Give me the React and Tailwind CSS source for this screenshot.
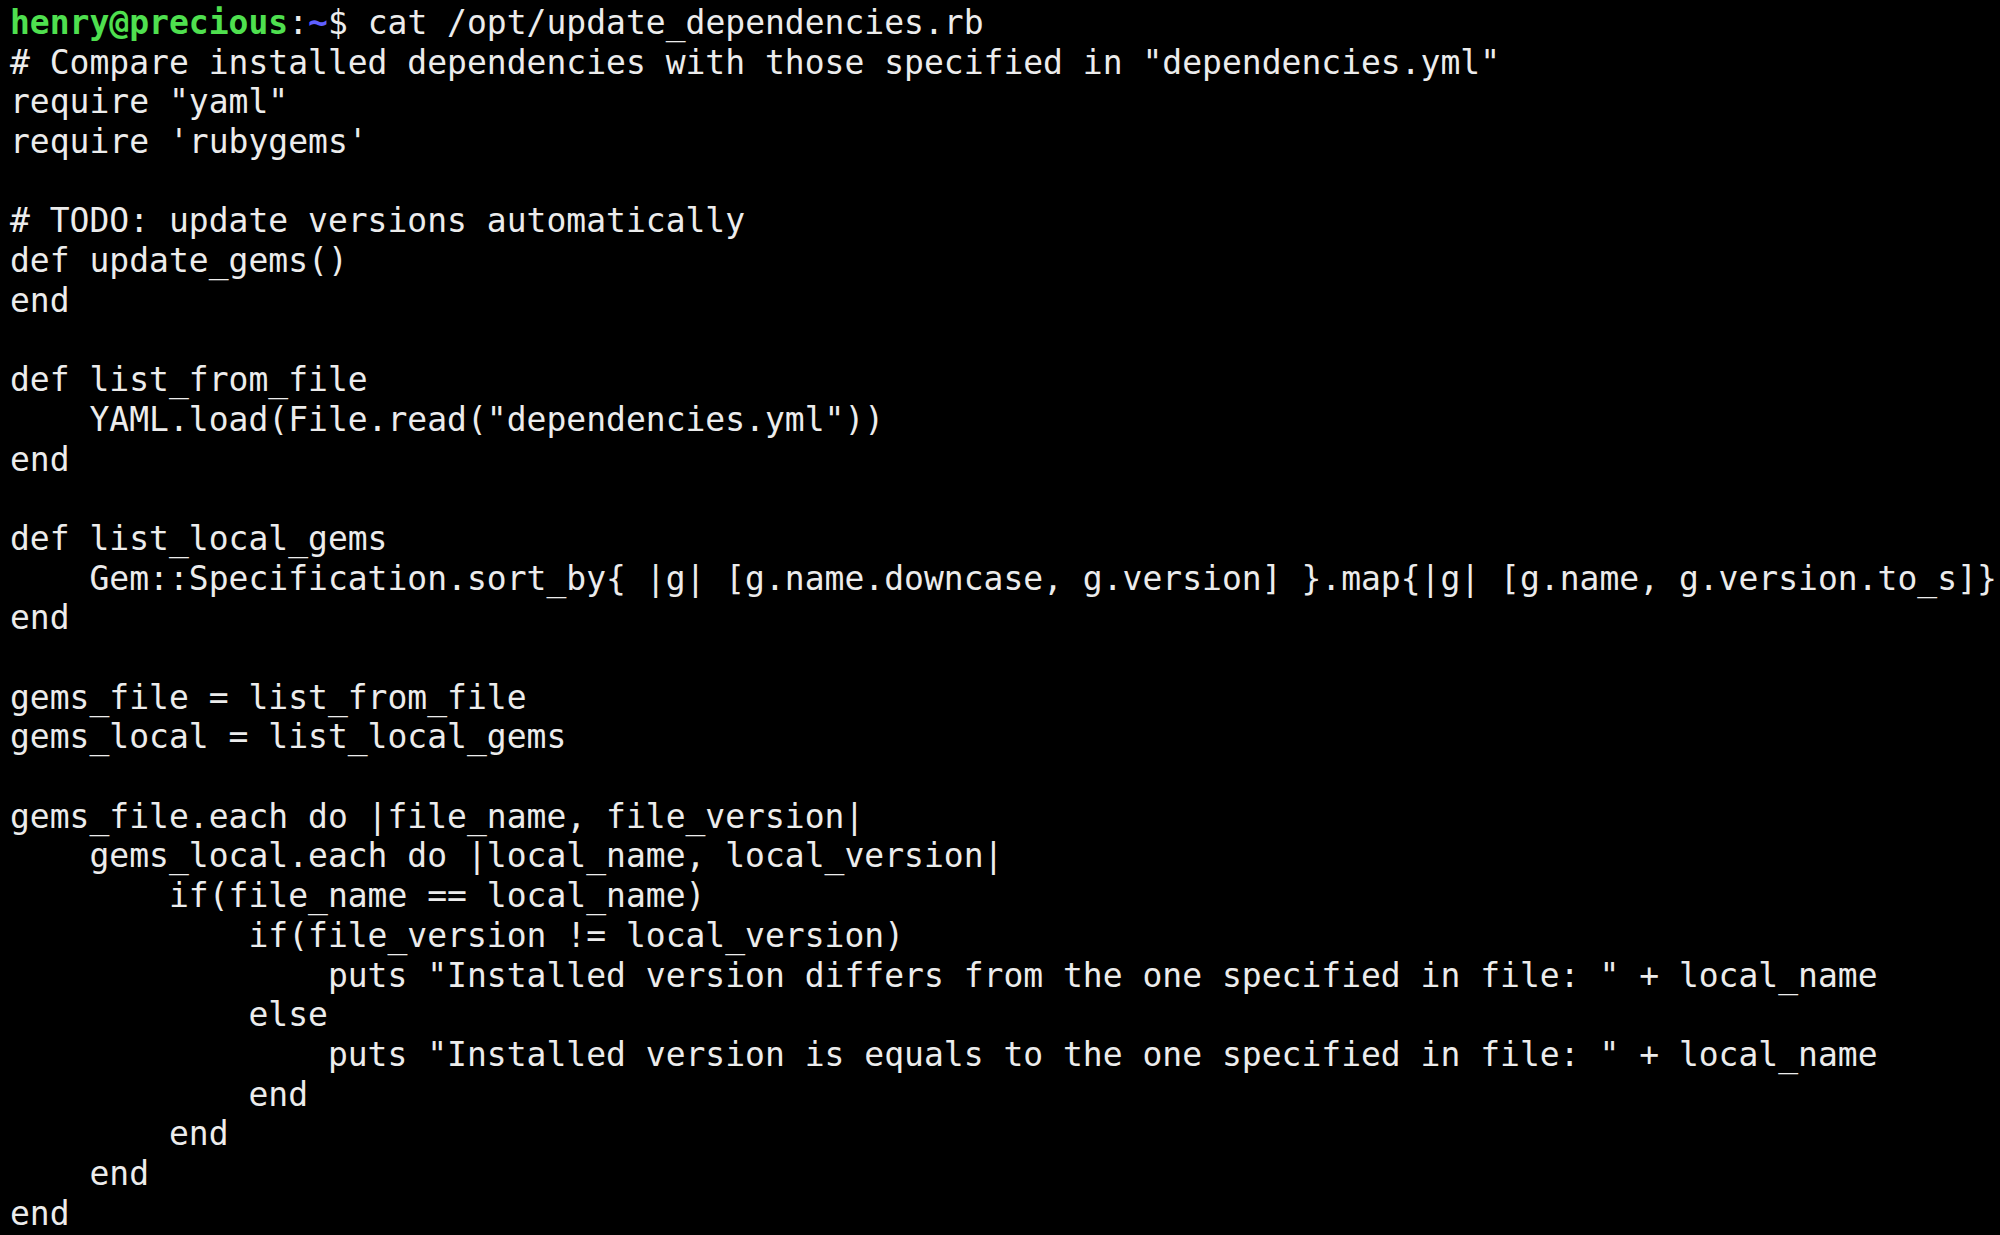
import React from 'react';

const lines = [
  '# Compare installed dependencies with those specified in "dependencies.yml"',
  'require "yaml"',
  "require 'rubygems'",
  '',
  '# TODO: update versions automatically',
  'def update_gems()',
  'end',
  '',
  'def list_from_file',
  '    YAML.load(File.read("dependencies.yml"))',
  'end',
  '',
  'def list_local_gems',
  '    Gem::Specification.sort_by{ |g| [g.name.downcase, g.version] }.map{|g| [g.name, g.version.to_s]}',
  'end',
  '',
  'gems_file = list_from_file',
  'gems_local = list_local_gems',
  '',
  'gems_file.each do |file_name, file_version|',
  '    gems_local.each do |local_name, local_version|',
  '        if(file_name == local_name)',
  '            if(file_version != local_version)',
  '                puts "Installed version differs from the one specified in file: " + local_name',
  '            else',
  '                puts "Installed version is equals to the one specified in file: " + local_name',
  '            end',
  '        end',
  '    end',
  'end',
];

export default function App() {
  return (
    <div className="w-[2000px] h-[1235px] overflow-hidden bg-black text-[#ececec] font-['DejaVu_Sans_Mono',monospace] text-[33px] leading-[39.7px] pl-[10px] pt-[3px]">
      {/* prompt */}
      <div className="whitespace-pre h-[39.7px]">
        <span className="font-bold text-[#4fe04f]">henry@precious</span>
        <span>:</span>
        <span className="font-bold text-[#5f5fff]">~</span>
        <span>$ cat /opt/update_dependencies.rb</span>
      </div>
      {lines.map((line, i) => (
        <div key={i} className="whitespace-pre h-[39.7px]">
          {line}
        </div>
      ))}
    </div>
  );
}
